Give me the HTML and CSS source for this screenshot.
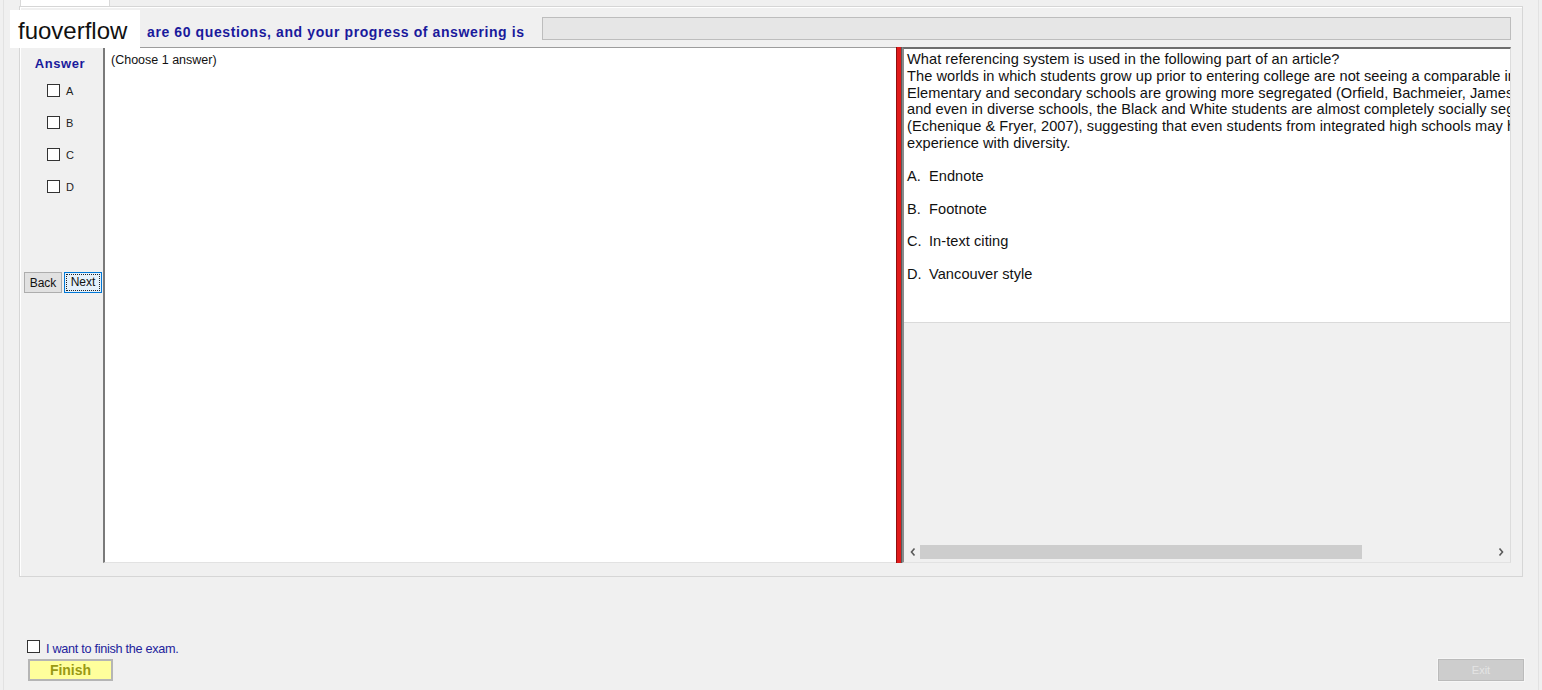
FILE: index.html
```html
<!DOCTYPE html>
<html lang="en">
<head>
    <meta charset="UTF-8">
    <title>Exam</title>
    <link rel="stylesheet" href="styles.css">
</head>
<body>
    <div class="page">
        <div class="tab"></div>

        <div class="group">
            <div class="header">
                <span class="header-text">are 60 questions, and your progress of answering is</span>
                <div class="progress"></div>
            </div>

            <div class="main">
                <!-- Answer column -->
                <aside class="sidebar">
                    <div class="answer-title">Answer</div>
                    <ul class="choices">
                        <li><span class="box"></span>A</li>
                        <li><span class="box"></span>B</li>
                        <li><span class="box"></span>C</li>
                        <li><span class="box"></span>D</li>
                    </ul>
                    <div class="nav">
                        <button class="btn">Back</button>
                        <button class="btn btn-focus"><span>Next</span></button>
                    </div>
                </aside>

                <section class="answer-pane">(Choose 1 answer)</section>

                <div class="splitter"></div>

                <!-- Question text -->
                <section class="question-pane">
                    <div class="question">
                        <p class="stem">What referencing system is used in the following part of an article?<br>The worlds in which students grow up prior to entering college are not seeing a comparable increase in diversity.<br>Elementary and secondary schools are growing more segregated (Orfield, Bachmeier, James, &amp; Eitle, 1997),<br>and even in diverse schools, the Black and White students are almost completely socially segregated<br>(Echenique &amp; Fryer, 2007), suggesting that even students from integrated high schools may have little<br>experience with diversity.</p>
                        <p class="opt"><span class="opt-key">A.</span>Endnote</p>
                        <p class="opt"><span class="opt-key">B.</span>Footnote</p>
                        <p class="opt"><span class="opt-key">C.</span>In-text citing</p>
                        <p class="opt"><span class="opt-key">D.</span>Vancouver style</p>
                    </div>
                    <div class="pane-fill"></div>
                    <div class="hscroll">
                        <svg class="arrow" width="6" height="8" viewBox="0 0 6 8"><path d="M4.5 0.5 L1.5 4 L4.5 7.5" fill="none" stroke="#5a5a5a" stroke-width="1.6"/></svg>
                        <div class="track"><div class="thumb"></div></div>
                        <svg class="arrow" width="6" height="8" viewBox="0 0 6 8"><path d="M1.5 0.5 L4.5 4 L1.5 7.5" fill="none" stroke="#5a5a5a" stroke-width="1.6"/></svg>
                    </div>
                </section>
            </div>
        </div>

        <div class="footer">
            <div class="finish-box">
                <label class="confirm"><span class="box"></span><span class="confirm-text">I want to finish the exam.</span></label>
                <button class="finish">Finish</button>
            </div>
            <button class="exit">Exit</button>
        </div>

        <div class="watermark">fuoverflow</div>
    </div>
</body>
</html>
```

FILE: styles.css
```css
/* Global Styles */
body {
    margin: 0;
    padding: 0;
    background: #f0f0f0;
    font-family: 'Liberation Sans', Arial, sans-serif;
    color: #111;
    overflow: hidden;
}

.page {
    position: relative;
    margin-left: 3px;
    width: 1536px;
    height: 690px;
    box-sizing: border-box;
    border-left: 1px solid #e2e2e2;
    border-right: 1px solid #e2e2e2;
}

.tab {
    margin-left: 16px;
    width: 90px;
    height: 6px;
    box-sizing: border-box;
    background: #fff;
    border: 1px solid #d9d9d9;
    border-top: none;
    border-bottom: none;
}

/* Main group box */
.group {
    margin-left: 15px;
    width: 1504px;
    height: 571px;
    box-sizing: border-box;
    border: 1px solid #d6d6d6;
    box-shadow: inset 1px 1px 0 #fff;
    padding: 10px 11px 13px 3px;
}

.header {
    display: flex;
    align-items: center;
    height: 23px;
    padding-left: 124px;
}

.header-text {
    padding-top: 6px;
    font-size: 14px;
    font-weight: bold;
    letter-spacing: 0.6px;
    color: #1a1a9c;
}

.progress {
    margin-left: auto;
    width: 969px;
    height: 23px;
    box-sizing: border-box;
    background: #e6e6e6;
    border: 1px solid #bdbdbd;
}

.main {
    display: flex;
    height: 516px;
    margin-top: 7px;
}

/* Answer column */
.sidebar {
    width: 80px;
    flex-shrink: 0;
    padding-top: 9px;
}

.answer-title {
    font-size: 13px;
    line-height: 16px;
    font-weight: bold;
    letter-spacing: 0.6px;
    color: #1a1a9c;
    text-align: center;
    padding-right: 6px;
}

.choices {
    list-style: none;
    margin: 12px 0 0;
    padding-left: 24px;
}

.choices li {
    display: flex;
    align-items: center;
    gap: 6px;
    height: 13px;
    margin-bottom: 19px;
    font-size: 11px;
    color: #222;
}

.choices li:last-child {
    margin-bottom: 0;
}

.box {
    display: inline-block;
    width: 13px;
    height: 13px;
    box-sizing: border-box;
    border: 1px solid #333;
    background: #fff;
    flex-shrink: 0;
}

.nav {
    display: flex;
    gap: 2px;
    margin-top: 79px;
    padding-left: 1px;
}

.btn {
    width: 38px;
    height: 21px;
    padding: 0;
    font-family: inherit;
    font-size: 12px;
    color: #111;
    background: #e1e1e1;
    border: 1px solid #adadad;
}

.btn-focus {
    background: #e5f1fb;
    border-color: #0078d7;
    padding: 2px;
}

.btn-focus span {
    display: block;
    height: 100%;
    box-sizing: border-box;
    line-height: 14px;
    outline: 1px dotted #222;
}

.answer-pane {
    width: 793px;
    flex-shrink: 0;
    box-sizing: border-box;
    background: #fff;
    border-left: 2px solid #7a7a7a;
    border-top: 1px solid #9c9c9c;
    border-bottom: 1px solid #e2e2e2;
    padding: 5px 6px;
    font-size: 12.5px;
}

.splitter {
    width: 6px;
    flex-shrink: 0;
    box-sizing: border-box;
    background: #e11a1a;
    border-left: 1px solid #8e1010;
    border-right: 1px solid #5a5a5a;
}

/* Question text */
.question-pane {
    flex: 1;
    min-width: 0;
    display: flex;
    flex-direction: column;
    border-top: 2px solid #6e6e6e;
    border-left: 2px solid #8a8a8a;
    border-right: 1px solid #dcdcdc;
    border-bottom: 1px solid #e2e2e2;
}

.question {
    height: 271px;
    background: #fff;
    border-bottom: 1px solid #dadada;
    overflow: hidden;
    white-space: nowrap;
    padding: 2px 0 0 3px;
    font-size: 14.6px;
    line-height: 16.8px;
    letter-spacing: 0.05px;
    color: #111;
}

.question p {
    margin: 0;
}

.question .opt {
    margin-top: 16px;
}

.opt-key {
    display: inline-block;
    width: 22px;
}

.pane-fill {
    flex: 1;
}

.hscroll {
    display: flex;
    align-items: center;
    height: 17px;
    margin-bottom: 2px;
    padding: 0 6px;
    gap: 4px;
}

.track {
    flex: 1;
    height: 14px;
}

.thumb {
    width: 442px;
    height: 100%;
    background: #cdcdcd;
}

/* Footer */
.footer {
    display: flex;
    align-items: flex-end;
    margin-top: 62px;
    padding: 0 14px 0 23px;
}

.confirm {
    display: flex;
    align-items: center;
    gap: 6px;
    height: 14px;
    font-size: 12.7px;
    letter-spacing: -0.3px;
    color: #23239c;
}

.confirm-text {
    padding-top: 5px;
}

.finish {
    display: block;
    margin: 6px 0 0 1px;
    width: 85px;
    height: 22px;
    padding: 0;
    background: #ffff9c;
    border: 2px solid #b5b5b5;
    font-family: inherit;
    font-size: 14px;
    font-weight: bold;
    color: #999913;
}

.exit {
    margin-left: auto;
    width: 86px;
    height: 22px;
    padding: 0;
    background: #cdcdcd;
    border: 1px solid #bbb;
    box-shadow: 0 0 0 1px #f6f6f6;
    font-family: inherit;
    font-size: 11px;
    color: #e4e4e4;
}

/* Watermark label over the header */
.watermark {
    position: absolute;
    left: 6px;
    top: 10px;
    width: 130px;
    height: 38px;
    box-sizing: border-box;
    padding: 3px 0 0 8px;
    background: #fff;
    font-size: 24px;
    line-height: 35px;
    color: #111;
}
```
